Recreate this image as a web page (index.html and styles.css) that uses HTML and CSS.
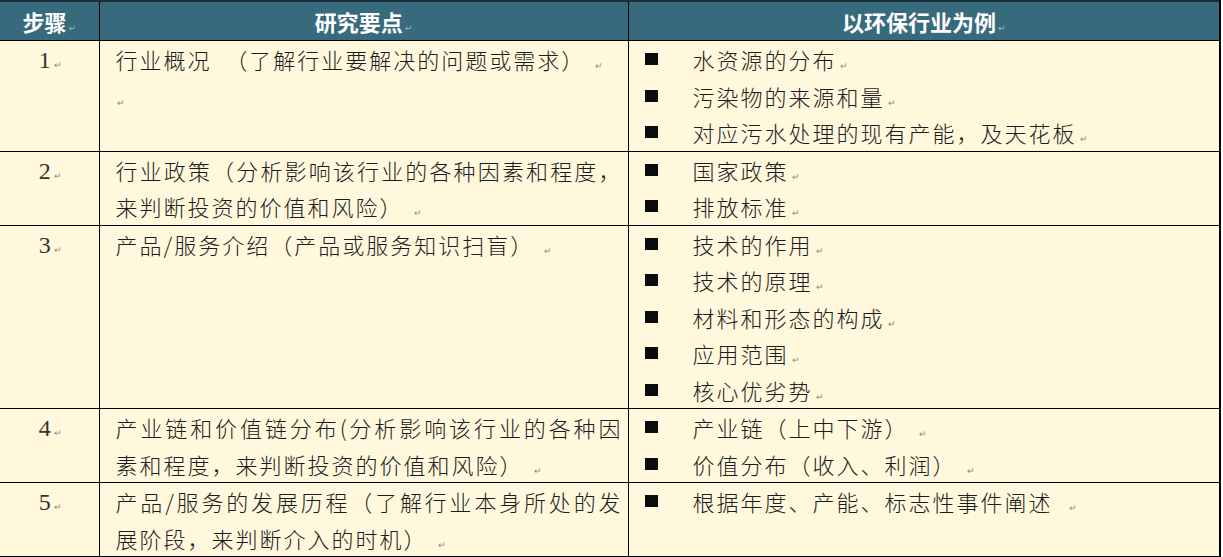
FILE: index.html
```html
<!DOCTYPE html>
<html lang="zh-CN">
<head>
<meta charset="utf-8">
<title>研究要点</title>
<link rel="stylesheet" href="styles.css">
</head>
<body>
<table class="grid">
  <colgroup>
    <col class="c-step">
    <col class="c-point">
    <col class="c-example">
  </colgroup>
  <thead>
    <tr>
      <th>步骤<span class="pm">↵</span></th>
      <th>研究要点<span class="pm">↵</span></th>
      <th>以环保行业为例<span class="pm">↵</span></th>
    </tr>
  </thead>
  <tbody>
    <tr>
      <td class="num">1<span class="pm">↵</span></td>
      <td class="point">行业概况&nbsp; （了解行业要解决的问题或需求）<span class="pm gap">↵</span><br><span class="pm solo">↵</span></td>
      <td class="ex">
        <div class="item"><span class="sq"></span><span>水资源的分布<span class="pm">↵</span></span></div>
        <div class="item"><span class="sq"></span><span>污染物的来源和量<span class="pm">↵</span></span></div>
        <div class="item"><span class="sq"></span><span>对应污水处理的现有产能，及天花板<span class="pm">↵</span></span></div>
      </td>
    </tr>
    <tr>
      <td class="num">2<span class="pm">↵</span></td>
      <td class="point">行业政策（分析影响该行业的各种因素和程度，来判断投资的价值和风险）<span class="pm gap">↵</span></td>
      <td class="ex">
        <div class="item"><span class="sq"></span><span>国家政策<span class="pm">↵</span></span></div>
        <div class="item"><span class="sq"></span><span>排放标准<span class="pm">↵</span></span></div>
      </td>
    </tr>
    <tr>
      <td class="num">3<span class="pm">↵</span></td>
      <td class="point">产品/服务介绍（产品或服务知识扫盲）<span class="pm gap">↵</span></td>
      <td class="ex">
        <div class="item"><span class="sq"></span><span>技术的作用<span class="pm">↵</span></span></div>
        <div class="item"><span class="sq"></span><span>技术的原理<span class="pm">↵</span></span></div>
        <div class="item"><span class="sq"></span><span>材料和形态的构成<span class="pm">↵</span></span></div>
        <div class="item"><span class="sq"></span><span>应用范围<span class="pm">↵</span></span></div>
        <div class="item"><span class="sq"></span><span>核心优劣势<span class="pm">↵</span></span></div>
      </td>
    </tr>
    <tr>
      <td class="num">4<span class="pm">↵</span></td>
      <td class="point">产业链和价值链分布(分析影响该行业的各种因素和程度，来判断投资的价值和风险）<span class="pm gap">↵</span></td>
      <td class="ex">
        <div class="item"><span class="sq"></span><span>产业链（上中下游）<span class="pm gap">↵</span></span></div>
        <div class="item"><span class="sq"></span><span>价值分布（收入、利润）<span class="pm gap">↵</span></span></div>
      </td>
    </tr>
    <tr>
      <td class="num">5<span class="pm">↵</span></td>
      <td class="point">产品/服务的发展历程（了解行业本身所处的发展阶段，来判断介入的时机）<span class="pm gap">↵</span></td>
      <td class="ex">
        <div class="item"><span class="sq"></span><span>根据年度、产能、标志性事件阐述 <span class="pm gap">↵</span></span></div>
      </td>
    </tr>
  </tbody>
</table>
</body>
</html>
```
FILE: styles.css
```css
html, body {
  margin: 0;
  padding: 0;
  background: #ffffff;
}

.grid {
  border-collapse: collapse;
  table-layout: fixed;
  width: 1220px;
  font-family: "Noto Sans CJK SC", "Noto Sans", sans-serif;
  color: #1c1c1c;
}

.c-step { width: 99px; }
.c-point { width: 529px; }
.c-example { width: 592px; }

.grid th,
.grid td {
  border: 1px solid #000000;
  padding: 0;
  vertical-align: top;
}

.grid th:first-child,
.grid td:first-child {
  border-left: none;
}

.grid th:last-child,
.grid td:last-child {
  border-right: 2px solid #000000;
}

.grid thead th {
  background: #386a7d;
  color: #ffffff;
  font-size: 22px;
  font-weight: 700;
  height: 38px;
  line-height: 38px;
  text-align: center;
  vertical-align: middle;
  border-top: 2px solid #1b2f38;
}

.grid tbody td {
  background: #fff8dc;
  font-size: 22px;
  line-height: 36.5px;
  letter-spacing: 2px;
  font-weight: 300;
}

.grid td.num {
  text-align: center;
  font-family: "Liberation Serif", serif;
  font-size: 24px;
  line-height: 38px;
  letter-spacing: 0;
  color: #333333;
  padding-left: 2px;
}

.grid td.point {
  padding: 0 5px 0 16px;
  text-align: justify;
}

.grid td.ex {
  padding: 0 0 0 16px;
}

.item {
  display: flex;
  align-items: center;
  height: 36.5px;
}

.sq {
  display: inline-block;
  flex: none;
  width: 13px;
  height: 12px;
  background: #0b0b0b;
  margin: 0 35px 0 0;
}

.pm {
  font-family: "DejaVu Sans", sans-serif;
  font-size: 9px;
  line-height: 0;
  color: #8a8a8a;
  letter-spacing: 0;
  margin-left: 3px;
  vertical-align: baseline;
}

.pm.gap {
  margin-left: 10px;
}

.pm.solo {
  margin-left: 1px;
}

.grid thead .pm {
  color: #9fb3bb;
  font-weight: 400;
  margin-left: 2px;
}
```
